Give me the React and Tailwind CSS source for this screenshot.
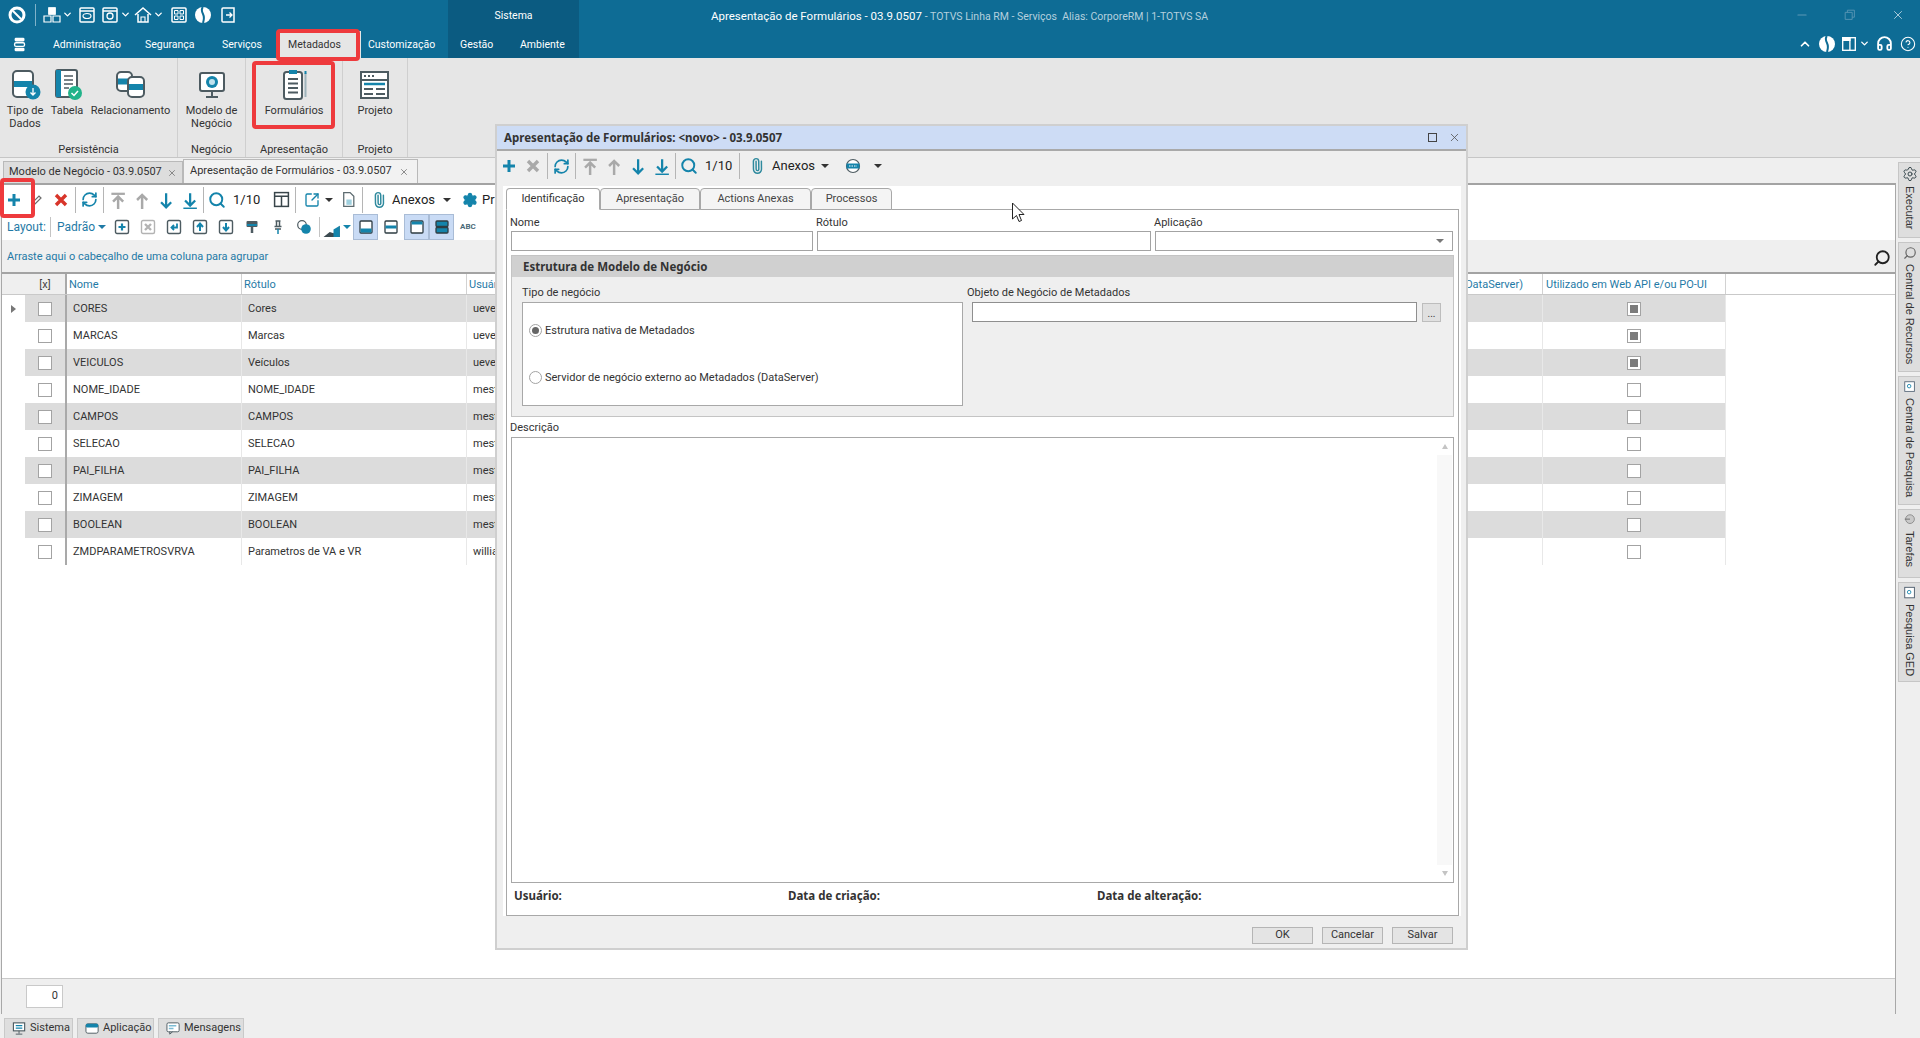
import React from 'react';
import { RefreshCw, Search, SquareArrowOutUpRight, Paperclip, Settings, X, Minus, ChevronDown, ChevronUp, CircleHelp, Headphones } from 'lucide-react';

const teal = '#1484ab';
const dark = '#4d5b61';
const boldFont = "font-bold text-[11.5px] text-[#333] [font-family:'Noto_Sans',sans-serif]";

const rows = [
    { nome: 'CORES', rotulo: 'Cores', user: 'uevertonfs', web: true },
    { nome: 'MARCAS', rotulo: 'Marcas', user: 'uevertonfs', web: true },
    { nome: 'VEICULOS', rotulo: 'Veículos', user: 'uevertonfs', web: true },
    { nome: 'NOME_IDADE', rotulo: 'NOME_IDADE', user: 'mestre', web: false },
    { nome: 'CAMPOS', rotulo: 'CAMPOS', user: 'mestre', web: false },
    { nome: 'SELECAO', rotulo: 'SELECAO', user: 'mestre', web: false },
    { nome: 'PAI_FILHA', rotulo: 'PAI_FILHA', user: 'mestre', web: false },
    { nome: 'ZIMAGEM', rotulo: 'ZIMAGEM', user: 'mestre', web: false },
    { nome: 'BOOLEAN', rotulo: 'BOOLEAN', user: 'mestre', web: false },
    { nome: 'ZMDPARAMETROSVRVA', rotulo: 'Parametros de VA e VR', user: 'william', web: false },
];

// small drawn icons, all on a 16 grid
const Ico = ({ s = 16, children, className }) => (
    <svg width={s} height={s} viewBox="0 0 16 16" fill="none" className={className}>{children}</svg>
);

const PlusIco = () => <Ico><path d="M8 2v12M2 8h12" stroke={teal} strokeWidth="3" /></Ico>;
const CrossIco = ({ c }) => <Ico><path d="M3 3l10 10M13 3L3 13" stroke={c} strokeWidth="3.4" /></Ico>;
const PencilIco = () => <Ico><path d="M3 13l1-3 6-6 2 2-6 6z" stroke="#6b6b6b" strokeWidth="1.2" /></Ico>;
const Refresh = () => <RefreshCw size={17} color={teal} strokeWidth={2.4} />;
const FirstIco = () => <Ico s={18}><path d="M3 2.5h12" stroke="#a9a9a9" strokeWidth="2" /><path d="M9 16V6M4.5 9.5L9 5l4.5 4.5" stroke="#a9a9a9" strokeWidth="2.2" /></Ico>;
const UpIco = () => <Ico s={18}><path d="M9 16V4M4.5 8L9 3.5 13.500 8" stroke="#a9a9a9" strokeWidth="2.2" /></Ico>;
const DownIco = () => <Ico s={18}><path d="M9 2v12M4.5 10L9 14.500 13.500 10" stroke={teal} strokeWidth="2" /></Ico>;
const LastIco = () => <Ico s={18}><path d="M9 2v10M4.500 8.500L9 13l4.500-4.500" stroke={teal} strokeWidth="2" /><path d="M3 15.500h12" stroke={teal} strokeWidth="1.600" /></Ico>;
const Lens = () => <Search size={18} color={teal} strokeWidth={2.6} />;
const Clip = () => <Paperclip size={16} color="#2f8a9e" strokeWidth={2.2} className="-rotate-45" />;
const Caret = ({ c = '#333' }) => <span className="inline-block border-x-[4px] border-t-[4px] border-x-transparent" style={{ borderTopColor: c }} />;

const BoxIco = ({ children, c = dark }) => (
    <Ico s={16}><rect x="1.500" y="1.500" width="13" height="13" rx="1.500" stroke={c} strokeWidth="1.400" fill="#fff" />{children}</Ico>
);

const Sep = ({ h = 'h-[26px]' }) => <div className="flex w-[4px] shrink-0 justify-center"><div className={`w-px bg-[#b5b5b5] ${h}`} /></div>;
const Cell = ({ children, w = 'w-[24px]' }) => <div className={`flex shrink-0 items-center justify-center ${w}`}>{children}</div>;

// header icons (white)
const W = ({ children, s = 20 }) => <svg width={s} height={s} viewBox="0 0 20 20" fill="none" stroke="#fff" strokeWidth="1.500">{children}</svg>;
const Chev = () => <ChevronDown size={11} color="#fff" strokeWidth={3} />;
const Globe = () => (
    <W><circle cx="10" cy="10" r="8" fill="#fff" stroke="none" /><path d="M10 2c-2 2-1 5 0 7s1 6 0 9" stroke="#0e6c95" strokeWidth="2" /></W>
);

// ribbon icons
const Db = ({ x = 4, y = 2, w = 18, h = 22 }) => (
    <g>
        <rect x={x} y={y} width={w} height={h} rx="4" fill="#fff" stroke={dark} strokeWidth="2" />
        <rect x={x + 1} y={y + h / 2 - 3} width={w - 2} height="6" fill={teal} />
    </g>
);
const RibIco = ({ children }) => <svg width="34" height="32" viewBox="0 0 34 32" fill="none">{children}</svg>;

const RibbonItem = ({ w, icon, label }) => (
    <div className={`flex shrink-0 flex-col items-center ${w}`}>
        <div className="mt-[11px] flex h-[32px] items-center justify-center">{icon}</div>
        <div className="mt-[3px] text-center text-[11px] leading-[13px] text-[#333] whitespace-pre">{label}</div>
    </div>
);

const RibbonGroup = ({ w, label, children }) => (
    <div className={`flex shrink-0 flex-col border-r border-[#cfcfcf] ${w}`}>
        <div className="flex h-[82px]">{children}</div>
        <div className="flex h-[17px] items-center justify-center pt-[1px] text-[11px] leading-none text-[#333]">{label}</div>
    </div>
);

const CheckBox = ({ on }) => (
    <div className="flex h-[14px] w-[14px] items-center justify-center border border-[#a3a3a3] bg-white">
        {on && <div className="h-[8px] w-[8px] bg-[#7c7c7c]" />}
    </div>
);

const SideTab = ({ h, icon, text }) => (
    <div className={`flex w-full flex-col items-center gap-[4px] border border-r-0 border-[#c6c6c6] bg-[#dedede] pt-[3px] ${h}`}>
        {icon}
        <span className="text-[11px] leading-none text-[#333] [font-family:'Liberation_Sans',sans-serif] [writing-mode:vertical-rl]">{text}</span>
    </div>
);

const BottomTab = ({ w, icon, text }) => (
    <div className={`flex h-[20px] items-center gap-[3px] border border-b-0 border-[#c9c9c9] bg-[#dedede] pl-[7px] text-[#333] ${w}`}>
        {icon}{text}
    </div>
);

const MainToolbar = () => (
    <div className="flex h-[28px] items-center pt-[1px]">
        <Cell w="w-[23px]"><PlusIco /></Cell>
        <Cell><PencilIco /></Cell>
        <Cell><CrossIco c="#d8352a" /></Cell>
        <Sep />
        <Cell><Refresh /></Cell>
        <Sep />
        <Cell><FirstIco /></Cell>
        <Cell><UpIco /></Cell>
        <Cell><DownIco /></Cell>
        <Cell><LastIco /></Cell>
        <Sep />
        <Cell><Lens /></Cell>
        <div className="w-[36px] shrink-0 pl-[4px] text-[13px] text-[#222]">1/10</div>
        <div className="ml-[4px]">
            <Cell>
                <Ico s={17}><rect x="1.500" y="1.500" width="13" height="13" stroke="#38454a" strokeWidth="1.400" /><path d="M1.500 5h13M8 5v10" stroke="#38454a" strokeWidth="1.400" /></Ico>
            </Cell>
        </div>
        <Sep />
        <div className="ml-[3px]"><Cell><SquareArrowOutUpRight size={16} color={teal} strokeWidth={2} /></Cell></div>
        <Cell w="w-[10px]"><Caret /></Cell>
        <div className="ml-[2px]">
            <Cell>
                <Ico s={17}><path d="M3.500 1.500h6l3.500 3.500v9.500h-9.500z" stroke="#5d6b70" strokeWidth="1.200" fill="#fff" /><rect x="6" y="8" width="5" height="5" fill="#9fd0de" /></Ico>
            </Cell>
        </div>
        <Sep />
        <div className="ml-[3px]"><Cell><Clip /></Cell></div>
        <div className="w-[51px] shrink-0 pl-[1px] text-[13px] text-[#222]">Anexos</div>
        <Cell w="w-[10px]"><Caret /></Cell>
        <div className="ml-[6px]"><Cell><Settings size={16} color={teal} fill={teal} strokeWidth={2} /></Cell></div>
        <span className="text-[13px] text-[#222]">Pr</span>
    </div>
);

const Toggle = ({ on, children }) => (
    <div className={`flex h-[26px] w-[25px] shrink-0 items-center justify-center border ${on ? 'border-[#a9bcd6] bg-[#c9dbf5]' : 'border-transparent'}`}>{children}</div>
);

const LayoutBar = () => (
    <div className="flex h-[27px] items-center">
        <div className="w-[46px] shrink-0 pl-[5px] text-[12px] text-[#1f7aa6]">Layout:</div>
        <div className="flex w-[4px] justify-center"><div className="h-[20px] w-px bg-[#c4c4c4]" /></div>
        <div className="flex w-[55px] shrink-0 items-center gap-[3px] pl-[5px] text-[12px] text-[#1f7aa6]">Padrão<Caret c="#1f7aa6" /></div>
        <div className="ml-[2px] flex">
            <Cell w="w-[26px]"><BoxIco><path d="M8 4.500v7M4.500 8h7" stroke={teal} strokeWidth="2.200" /></BoxIco></Cell>
            <Cell w="w-[26px]"><BoxIco c="#b3b3b3"><path d="M5 5l6 6M11 5l-6 6" stroke="#b3b3b3" strokeWidth="2.400" /></BoxIco></Cell>
            <Cell w="w-[26px]"><BoxIco><path d="M11 4.500v4H6M8 6L5.500 8.500 8 11" stroke={teal} strokeWidth="1.800" /></BoxIco></Cell>
            <Cell w="w-[26px]"><BoxIco><path d="M8 12V5M5 8l3-3.500L11 8" stroke={teal} strokeWidth="2" /></BoxIco></Cell>
            <Cell w="w-[26px]"><BoxIco><path d="M8 4v7M5 8l3 3.500L11 8" stroke={teal} strokeWidth="2" /></BoxIco></Cell>
            <Cell w="w-[26px]">
                <Ico><rect x="2.500" y="2" width="11" height="6" rx="1" fill={dark} /><rect x="3" y="5" width="10" height="2" fill={teal} /><path d="M8 8v6" stroke={dark} strokeWidth="2.500" /></Ico>
            </Cell>
            <Cell w="w-[26px]">
                <Ico><path d="M5.500 2h5M6.500 2v5M9.500 2v5M4.500 7.500h7M5 10h6" stroke={dark} strokeWidth="1.500" /><path d="M8 10v5" stroke={teal} strokeWidth="1.500" /></Ico>
            </Cell>
            <Cell w="w-[26px]">
                <Ico><circle cx="6" cy="6" r="4.300" stroke={dark} strokeWidth="1.200" fill="#fff" /><circle cx="10" cy="10" r="4.800" fill={teal} /></Ico>
            </Cell>
        </div>
        <div className="flex w-[4px] justify-center"><div className="h-[20px] w-px bg-[#c4c4c4]" /></div>
        <div className="flex w-[32px] items-center gap-[2px]">
            <Ico s={20}><path d="M2 16l5-4 3 1 5-6v9z" fill="#3c4a50" /><path d="M10 10l5-3v9h-5z" fill={teal} /></Ico>
            <Caret c={teal} />
        </div>
        <Toggle on><Ico><rect x="2" y="2" width="12" height="12" rx="1" stroke="#2e3c42" strokeWidth="1.300" fill="#fff" /><rect x="2.500" y="9.500" width="11" height="4" fill={teal} /></Ico></Toggle>
        <Toggle><Ico><rect x="2" y="2" width="12" height="12" rx="1" stroke="#2e3c42" strokeWidth="1.300" fill="#fff" /><rect x="2.500" y="6.500" width="11" height="3" fill={teal} /></Ico></Toggle>
        <div className="ml-[1px]" />
        <Toggle on><Ico><rect x="2" y="2" width="12" height="12" rx="1" stroke="#2e3c42" strokeWidth="1.300" fill="#fff" /><rect x="2.500" y="2.500" width="11" height="3" fill={teal} /></Ico></Toggle>
        <Toggle on><Ico><rect x="2" y="2" width="12" height="5.500" rx="1" stroke="#2e3c42" strokeWidth="1.300" fill={teal} /><rect x="2" y="8.500" width="12" height="5.500" rx="1" stroke="#2e3c42" strokeWidth="1.300" fill={teal} /></Ico></Toggle>
        <span className="ml-[6px] text-[8px] font-bold leading-none text-[#4d6b78]">ABC</span>
    </div>
);

const GridTable = () => (
    <div className="flex min-h-0 flex-1 flex-col border-t-2 border-[#a3a3a3] bg-white">
        <div className="flex h-[21px] shrink-0 border-b border-[#c9c9c9] text-[#1f7aa6]">
            <div className="w-[23px] shrink-0 bg-[#efefef]" />
            <div className="flex w-[42px] shrink-0 items-center justify-center border-r-2 border-[#a9a9a9] bg-[#efefef] pt-[2px] text-[#444]">[x]</div>
            <div className="flex w-[175px] shrink-0 items-center border-r border-[#d2d2d2] pl-[2px] pt-[2px]">Nome</div>
            <div className="flex w-[225px] shrink-0 items-center border-r border-[#d2d2d2] pl-[2px] pt-[2px]">Rótulo</div>
            <div className="flex w-[150px] shrink-0 items-center border-r border-[#d2d2d2] pl-[2px] pt-[2px]">Usuário</div>
            <div className="flex w-[926px] shrink-0 items-center justify-end border-r border-[#d2d2d2] pr-[19px] pt-[2px]">Servidor de negócio externo ao Metadados (DataServer)</div>
            <div className="flex w-[183px] shrink-0 items-center border-r border-[#d2d2d2] pl-[3px] pt-[2px]">Utilizado em Web API e/ou PO-UI</div>
        </div>
        {rows.map((row, index) => (
            <div key={row.nome} className="flex h-[27px] shrink-0 items-center text-[#333]">
                <div className="flex h-full w-[23px] shrink-0 items-center justify-center">
                    {index === 0 && <span className="border-y-[4px] border-l-[5px] border-y-transparent border-l-[#777]" />}
                </div>
                <div className={`flex h-full shrink-0 ${index % 2 === 0 ? 'bg-[#dcdcdc]' : 'bg-white'}`}>
                    <div className="flex w-[42px] items-center justify-center border-r-2 border-[#a9a9a9]"><CheckBox /></div>
                    <div className="flex w-[175px] items-center border-r border-[#e8e8e8] pl-[6px] pt-[2px]">{row.nome}</div>
                    <div className="flex w-[225px] items-center border-r border-[#e8e8e8] pl-[6px] pt-[2px]">{row.rotulo}</div>
                    <div className="flex w-[150px] items-center border-r border-[#e8e8e8] pl-[6px] pt-[2px]">{row.user}</div>
                    <div className="w-[926px] border-r border-[#e8e8e8]" />
                    <div className="flex w-[183px] items-center justify-center border-r border-[#e8e8e8]"><CheckBox on={row.web} /></div>
                </div>
            </div>
        ))}
    </div>
);

const DialogTab = ({ w, active, children }) => (
    <div className={`relative flex h-[22px] shrink-0 items-center justify-center rounded-t-[4px] border border-[#a8a8a8] pt-[1px] text-[#444] ${w} ${active ? 'z-10 border-b-white bg-white' : 'bg-[#f4f4f4]'}`}>
        <span className={active ? 'text-[#333]' : ''}>{children}</span>
    </div>
);

const Field = ({ w, label, arrow }) => (
    <div className={`shrink-0 ${w}`}>
        <div className="-ml-px flex h-[21px] items-center pt-[5px] text-[#333]">{label}</div>
        <div className="flex h-[20px] items-center justify-end border border-[#a3a3a3] bg-white pr-[8px]">
            {arrow && <Caret c="#777" />}
        </div>
    </div>
);

const Radio = ({ on, label }) => (
    <div className="flex items-center gap-[3px] leading-[13px] text-[#333]">
        <div className="flex h-[13px] w-[13px] items-center justify-center rounded-full border border-[#a3a3a3] bg-white">
            {on && <div className="h-[7px] w-[7px] rounded-full bg-[#666]" />}
        </div>
        {label}
    </div>
);

const Btn = ({ children }) => (
    <div className="flex h-[17px] w-[61px] items-center justify-center border border-[#b5b5b5] bg-[#e4e4e4] text-[#333]">{children}</div>
);

const Dialog = () => (
    <div className="absolute left-[495px] top-[124px] z-20 flex h-[826px] w-[973px] flex-col border-2 border-[#cfcfcf] bg-[#efefef]">
        <div className="flex h-[25px] shrink-0 items-center justify-between border-b-2 border-[#a9a9a9] bg-[#cddcf5] pl-[7px] pr-[5px]">
            <span className={boldFont}>Apresentação de Formulários: &lt;novo&gt; - 03.9.0507</span>
            <div className="flex items-center gap-[11px]">
                <div className="h-[9px] w-[9px] border border-[#444]" />
                <X size={13} color="#555" strokeWidth={1.5} />
            </div>
        </div>
        <div className="flex h-[35px] shrink-0 items-center pb-[5px]">
            <Cell><PlusIco /></Cell>
            <Cell><CrossIco c="#a9a9a9" /></Cell>
            <Sep />
            <Cell><Refresh /></Cell>
            <Sep />
            <Cell><FirstIco /></Cell>
            <Cell><UpIco /></Cell>
            <Cell><DownIco /></Cell>
            <Cell><LastIco /></Cell>
            <Sep />
            <Cell><Lens /></Cell>
            <div className="w-[36px] shrink-0 pl-[4px] text-[13px] text-[#222]">1/10</div>
            <Sep />
            <div className="ml-[4px]"><Cell><Clip /></Cell></div>
            <div className="w-[51px] shrink-0 pl-[3px] text-[13px] text-[#222]">Anexos</div>
            <Cell w="w-[10px]"><Caret /></Cell>
            <div className="ml-[11px]">
                <Cell>
                    <Ico><circle cx="8" cy="8" r="6.500" fill="#fff" stroke={dark} strokeWidth="1.200" /><rect x="1.500" y="5.500" width="13" height="5" fill={teal} /><path d="M4 8h8" stroke="#fff" strokeDasharray="1.500 1" /></Ico>
                </Cell>
            </div>
            <div className="ml-[8px]"><Cell w="w-[10px]"><Caret /></Cell></div>
        </div>
        <div className="ml-[6px] mr-[5px] flex h-[730px] shrink-0 flex-col bg-white pl-[3px] pr-[2px] pt-[2px]">
            <div className="-mb-px flex shrink-0">
                <DialogTab w="w-[94px]" active>Identificação</DialogTab>
                <DialogTab w="w-[100px]">Apresentação</DialogTab>
                <DialogTab w="w-[111px]">Actions Anexas</DialogTab>
                <DialogTab w="w-[81px]">Processos</DialogTab>
            </div>
            <div className="flex h-[707px] flex-col border border-[#a8a8a8] px-[4px]">
                <div className="flex gap-[4px]">
                    <Field w="w-[302px]" label="Nome" />
                    <Field w="w-[334px]" label="Rótulo" />
                    <Field w="w-[298px]" label="Aplicação" arrow />
                </div>
                <div className="mt-[4px] flex h-[162px] shrink-0 flex-col border border-[#c4c4c4] bg-[#efefef]">
                    <div className={`flex h-[21px] shrink-0 items-center bg-[#d0d0d0] pl-[11px] ${boldFont}`}>Estrutura de Modelo de Negócio</div>
                    <div className="flex pl-[10px]">
                        <div className="w-[441px] shrink-0">
                            <div className="flex h-[25px] items-center pt-[7px] text-[#333]">Tipo de negócio</div>
                            <div className="flex h-[104px] flex-col gap-[34px] border border-[#a8a8a8] bg-white pl-[6px] pt-[21px]">
                                <Radio on label="Estrutura nativa de Metadados" />
                                <Radio label="Servidor de negócio externo ao Metadados (DataServer)" />
                            </div>
                        </div>
                        <div className="ml-[4px] flex-1">
                            <div className="flex h-[25px] items-center pt-[7px] text-[#333]">Objeto de Negócio de Metadados</div>
                            <div className="flex items-center gap-[5px] pl-[5px]">
                                <div className="h-[20px] w-[445px] border border-[#8f8f8f] bg-white" />
                                <div className="flex h-[19px] w-[19px] items-end justify-center border border-[#bdbdbd] bg-[#e0e0e0] text-[10px] leading-[14px] text-[#333]">...</div>
                            </div>
                        </div>
                    </div>
                </div>
                <div className="-ml-px flex h-[20px] shrink-0 items-center pt-[3px] text-[#333]">Descrição</div>
                <div className="flex h-[446px] shrink-0 justify-end border border-[#a8a8a8] bg-white pr-px">
                    <div className="flex w-[15px] flex-col justify-between bg-[#f8f8f8]">
                        <div className="flex h-[17px] items-center justify-center bg-white"><span className="border-x-[3px] border-b-[5px] border-x-transparent border-b-[#c4c4c4]" /></div>
                        <div className="flex h-[17px] items-center justify-center bg-white"><span className="border-x-[3px] border-t-[5px] border-x-transparent border-t-[#c4c4c4]" /></div>
                    </div>
                </div>
                <div className={`flex h-[26px] shrink-0 items-center pb-[1px] ${boldFont}`}>
                    <span className="ml-[3px] w-[274px]">Usuário:</span>
                    <span className="w-[309px]">Data de criação:</span>
                    <span>Data de alteração:</span>
                </div>
            </div>
        </div>
        <div className="mt-[11px] flex justify-end gap-[9px] pr-[13px]">
            <Btn>OK</Btn>
            <Btn>Cancelar</Btn>
            <Btn>Salvar</Btn>
        </div>
    </div>
);

const Highlight = ({ className }) => <div className={`pointer-events-none absolute z-30 rounded-[4px] border-[4px] border-[#ee3a3d] ${className}`} />;

export default function App() {
    return (
        <div className="relative flex h-[1038px] w-[1920px] flex-col overflow-hidden bg-[#efefef] text-[11px] [font-family:Roboto,sans-serif]">
            {/* Header */}
            <header className="flex h-[58px] shrink-0 bg-[#0e6c95] text-[10.5px] text-white">
                <div className="flex w-[448px] shrink-0 flex-col">
                    <div className="flex h-[29px] items-center">
                        <div className="ml-[7px] flex w-[20px] justify-center">
                            <W><circle cx="10" cy="10" r="7" strokeWidth="3" /><path d="M6 6l8 8" strokeWidth="2" /></W>
                        </div>
                        <div className="ml-[8px] h-[22px] w-px bg-[#7fb2c9]" />
                        <div className="ml-[6px] flex items-center"><W><path d="M7 3h6v6H7zM2 11h7v6H2zM11 11h7v6h-7z" strokeWidth="1.200" /><path d="M7 3h6v6H7z" fill="#fff" /></W><Chev /></div>
                        <div className="ml-[4px]"><W><rect x="3" y="3" width="14" height="14" rx="1" /><ellipse cx="10" cy="11" rx="4" ry="2.500" strokeWidth="1.200" /><path d="M3 6h14" /></W></div>
                        <div className="ml-[3px] flex items-center"><W><rect x="3" y="3" width="14" height="14" rx="1" /><circle cx="10" cy="11" r="3" strokeWidth="1.300" /><path d="M3 6h14" /></W><Chev /></div>
                        <div className="ml-[2px] flex items-center"><W><path d="M2 10l8-7 8 7M5 9v8h10V9" /><path d="M8 17v-5h4v5" strokeWidth="1.100" /></W><Chev /></div>
                        <div className="ml-[5px]"><W><rect x="3" y="3" width="14" height="14" rx="1" /><path d="M5.500 5.500h3.500v3.500H5.500zM11 5.500h3.500v3.500H11zM5.500 11h3.500v3.500H5.500zM11 11h3.500v3.500H11z" strokeWidth="1" /></W></div>
                        <div className="ml-[4px]"><Globe /></div>
                        <div className="ml-[5px]"><W><path d="M4 4a1 1 0 0 1 1-1h11v14H5a1 1 0 0 1-1-1z" /><path d="M8 10h6M11.500 7.500L14 10l-2.500 2.500" strokeWidth="1.300" /></W></div>
                    </div>
                    <nav className="flex h-[29px] items-center pt-[2px]">
                        <div className="ml-[11px] flex w-[18px] justify-center">
                            <W s={18}><rect x="4" y="2" width="11" height="4" rx="1.500" fill="#fff" stroke="none" /><rect x="4" y="7.500" width="11" height="4" rx="1.500" strokeWidth="1.500" /><rect x="4" y="13" width="11" height="4" rx="1.500" fill="#fff" stroke="none" /></W>
                        </div>
                        <span className="ml-[24px] w-[92px]">Administração</span>
                        <span className="w-[77px]">Segurança</span>
                        <span className="w-[55px]">Serviços</span>
                        <div className="flex h-[27px] w-[84px] items-center bg-[#e6e6e6] pl-[11px] text-[#333]">Metadados</div>
                        <span className="ml-[7px]">Customização</span>
                    </nav>
                </div>
                <div className="flex w-[131px] shrink-0 flex-col bg-[#0b5b81]">
                    <div className="flex h-[29px] items-center justify-center pt-[3px]">Sistema</div>
                    <div className="flex h-[29px] items-center pt-[2px]">
                        <span className="ml-[12px] w-[60px]">Gestão</span>
                        <span>Ambiente</span>
                    </div>
                </div>
                <div className="flex min-w-0 flex-1 flex-col">
                    <div className="flex h-[29px] items-center">
                        <div className="ml-[132px] flex-1 pt-[4px] text-[11.500px]">
                            Apresentação de Formulários - 03.9.0507 <span className="text-[10.5px] text-[#b5d0de]">- TOTVS Linha RM - Serviços&nbsp; Alias: CorporeRM | 1-TOTVS SA</span>
                        </div>
                        <div className="flex items-center gap-[34px] pr-[15px]">
                            <Minus size={14} color="#5c97b6" />
                            <Ico s={14}><path d="M2.500 5h8v8h-8zM5 5V2.500h8v8h-2.500" stroke="#5c97b6" /></Ico>
                            <X size={14} color="#bcd6e2" strokeWidth={1.500} />
                        </div>
                    </div>
                    <div className="flex h-[29px] items-center justify-end pr-[4px]">
                        <ChevronUp size={14} color="#fff" strokeWidth={3} />
                        <div className="ml-[5px]"><Globe /></div>
                        <div className="ml-[3px] flex items-center gap-[1px]">
                            <W s={18}><rect x="3" y="3" width="14" height="14" /><path d="M11 3v14" /><path d="M3 3h8v3H3z" fill="#fff" /></W>
                            <Chev />
                        </div>
                        <div className="ml-[6px]"><Headphones size={17} color="#fff" strokeWidth={2.600} /></div>
                        <div className="ml-[7px]"><CircleHelp size={16} color="#fff" strokeWidth={1.600} /></div>
                    </div>
                </div>
            </header>

            {/* Ribbon */}
            <section className="flex h-[100px] shrink-0 border-b border-[#c6c6c6] bg-[#e6e6e6]">
                <RibbonGroup w="w-[178px]" label="Persistência">
                    <RibbonItem w="w-[50px]" label={'Tipo de\nDados'} icon={
                        <RibIco><Db x={5} y={2} w={20} h={26} /><circle cx="25" cy="23" r="7.500" fill={teal} /><path d="M25 19v7M22.500 23.500L25 26l2.500-2.500" stroke="#fff" strokeWidth="1.300" /></RibIco>
                    } />
                    <RibbonItem w="w-[34px]" label="Tabela" icon={
                        <RibIco><rect x="6" y="1" width="21" height="27" rx="2" fill="#fff" stroke={dark} strokeWidth="2" /><rect x="6" y="1" width="5" height="27" fill={teal} /><path d="M14 7h9M14 11h9M14 15h9M14 19h5" stroke={dark} strokeWidth="1.500" /><circle cx="25" cy="24" r="7" fill="#21b38a" /><path d="M21.500 24l2.500 2.500 4-4.500" stroke="#fff" strokeWidth="1.500" /></RibIco>
                    } />
                    <RibbonItem w="w-[93px]" label="Relacionamento" icon={
                        <RibIco><Db x={3} y={3} w={15} h={19} /><Db x={14} y={8} w={16} h={20} /></RibIco>
                    } />
                </RibbonGroup>
                <RibbonGroup w="w-[68px]" label="Negócio">
                    <RibbonItem w="w-[67px]" label={'Modelo de\nNegócio'} icon={
                        <RibIco><rect x="5" y="4" width="24" height="18" rx="2" fill="#fff" stroke={dark} strokeWidth="2" /><circle cx="17" cy="13" r="6" fill={teal} /><circle cx="17" cy="13" r="3" fill="#bfe2ee" /><path d="M17 22v5M11 28h12" stroke={dark} strokeWidth="2" /></RibIco>
                    } />
                </RibbonGroup>
                <RibbonGroup w="w-[97px]" label="Apresentação">
                    <RibbonItem w="w-[96px]" label="Formulários" icon={
                        <RibIco><rect x="7" y="3" width="18" height="27" rx="2.500" fill="#fff" stroke={dark} strokeWidth="2" /><rect x="12" y="1" width="8" height="4" fill={teal} /><path d="M11 10h10M11 14.500h10M11 19h10M11 23.500h10" stroke={dark} strokeWidth="2" /><path d="M28.500 4v24" stroke="#9fb4bc" strokeWidth="2" /><path d="M28.500 2v3" stroke={teal} strokeWidth="2" /></RibIco>
                    } />
                </RibbonGroup>
                <RibbonGroup w="w-[65px]" label="Projeto">
                    <RibbonItem w="w-[64px]" label="Projeto" icon={
                        <RibIco><rect x="3" y="3" width="27" height="26" fill="#fff" stroke={dark} strokeWidth="2" /><path d="M6 7h2M10 7h2M14 7h2" stroke={dark} strokeWidth="2" /><path d="M3 11h27" stroke={dark} strokeWidth="2" /><path d="M6 15h21" stroke={teal} strokeWidth="2.500" /><path d="M6 20h9M18 20h9M6 25h9M18 25h9" stroke={dark} strokeWidth="2" /></RibIco>
                    } />
                </RibbonGroup>
            </section>

            {/* Workspace */}
            <div className="flex min-h-0 flex-1">
                <div className="flex w-[1896px] shrink-0 flex-col">
                    <div className="flex h-[25px] shrink-0 items-end pl-[3px] whitespace-nowrap text-[#333]">
                        <div className="flex h-[22px] w-[180px] items-center justify-between border border-b-0 border-[#b9b9b9] bg-[#dddddd] pl-[5px] pr-[5px]">
                            Modelo de Negócio - 03.9.0507 <X size={10} color="#777" />
                        </div>
                        <div className="flex h-[24px] w-[235px] items-center justify-between border border-b-0 border-[#b9b9b9] bg-[#f2f2f2] pl-[6px] pr-[8px]">
                            Apresentação de Formulários - 03.9.0507 <X size={10} color="#777" />
                        </div>
                    </div>
                    <main className="ml-px flex h-[831px] shrink-0 flex-col border-x border-t-2 border-[#a3a3a3] border-x-[#a8a8a8] bg-white">
                        <MainToolbar />
                        <LayoutBar />
                        <div className="flex h-[32px] shrink-0 items-center justify-between bg-[#efefef] pl-[5px] pr-[4px] pt-[3px] text-[#1f7aa6]">
                            Arraste aqui o cabeçalho de uma coluna para agrupar
                            <Search size={18} color="#222" strokeWidth={2.400} className="-scale-x-100" />
                        </div>
                        <GridTable />
                        <div className="flex h-[36px] shrink-0 items-center border-t border-[#c9c9c9] bg-[#efefef] pl-[24px]">
                            <div className="flex h-[23px] w-[37px] items-center justify-end border border-[#c9c9c9] bg-white pr-[4px] text-[#333]">0</div>
                        </div>
                    </main>
                    <div className="mt-[4px] flex gap-[4px] pl-[4px] text-[#333]">
                        <BottomTab w="w-[69px]" text="Sistema" icon={
                            <Ico s={15}><rect x="1.500" y="2" width="12" height="8.500" fill="#fff" stroke={dark} strokeWidth="1.200" /><path d="M4 5h7M4 7.500h7" stroke={teal} strokeWidth="1.300" /><path d="M7.500 10.500v3M4 14h7" stroke={dark} /></Ico>
                        } />
                        <BottomTab w="w-[77px]" text="Aplicação" icon={
                            <Ico s={15}><rect x="1" y="3" width="13" height="10" rx="2" fill="#fff" stroke={dark} /><rect x="1" y="3" width="13" height="4" rx="1.500" fill={teal} /></Ico>
                        } />
                        <BottomTab w="w-[86px]" text="Mensagens" icon={
                            <Ico s={15}><rect x="1" y="2" width="13" height="9.500" rx="1.500" fill="#fff" stroke={dark} /><path d="M3 5h8M3 8h5" stroke="#7cbcd4" strokeWidth="1.500" /><path d="M4 11.500V14l3-2.500" stroke={dark} /></Ico>
                        } />
                    </div>
                </div>
                <aside className="flex min-w-0 flex-1 flex-col gap-[4px] pl-[2px] pt-[4px]">
                    <SideTab h="h-[76px]" text="Executar" icon={<Settings size={16} color="#3a4a50" strokeWidth={1.500} />} />
                    <SideTab h="h-[130px]" text="Central de Recursos" icon={<Search size={14} color="#666" className="-scale-x-100" />} />
                    <SideTab h="h-[129px]" text="Central de Pesquisa" icon={<Ico s={14}><rect x="2" y="2" width="11" height="11" fill="#fff" stroke="#567" /><circle cx="7" cy="7" r="2" stroke={teal} /></Ico>} />
                    <SideTab h="h-[69px]" text="Tarefas" icon={<Ico s={14}><circle cx="8" cy="7" r="5" fill="#c9c9c9" stroke="#888" /><path d="M2 7h6" stroke="#666" /></Ico>} />
                    <SideTab h="h-[100px]" text="Pesquisa GED" icon={<Ico s={14}><rect x="2" y="1.500" width="11" height="12" fill="#fff" stroke="#456" /><circle cx="7" cy="7" r="2" stroke={teal} /></Ico>} />
                </aside>
            </div>

            <Dialog />

            {/* mouse cursor */}
            <svg width="14" height="22" viewBox="0 0 14 22" className="absolute left-[1011px] top-[202px] z-40">
                <path d="M1.500 1v16l4-3.500 2.500 6 2.500-1-2.500-6h5z" fill="#fff" stroke="#222" strokeWidth="1" />
            </svg>

            {/* red marks from the tutorial */}
            <Highlight className="left-[276px] top-[29px] h-[32px] w-[84px]" />
            <Highlight className="left-[252px] top-[61px] h-[68px] w-[83px]" />
            <Highlight className="left-0 top-[178px] h-[40px] w-[35px]" />
        </div>
    );
}
